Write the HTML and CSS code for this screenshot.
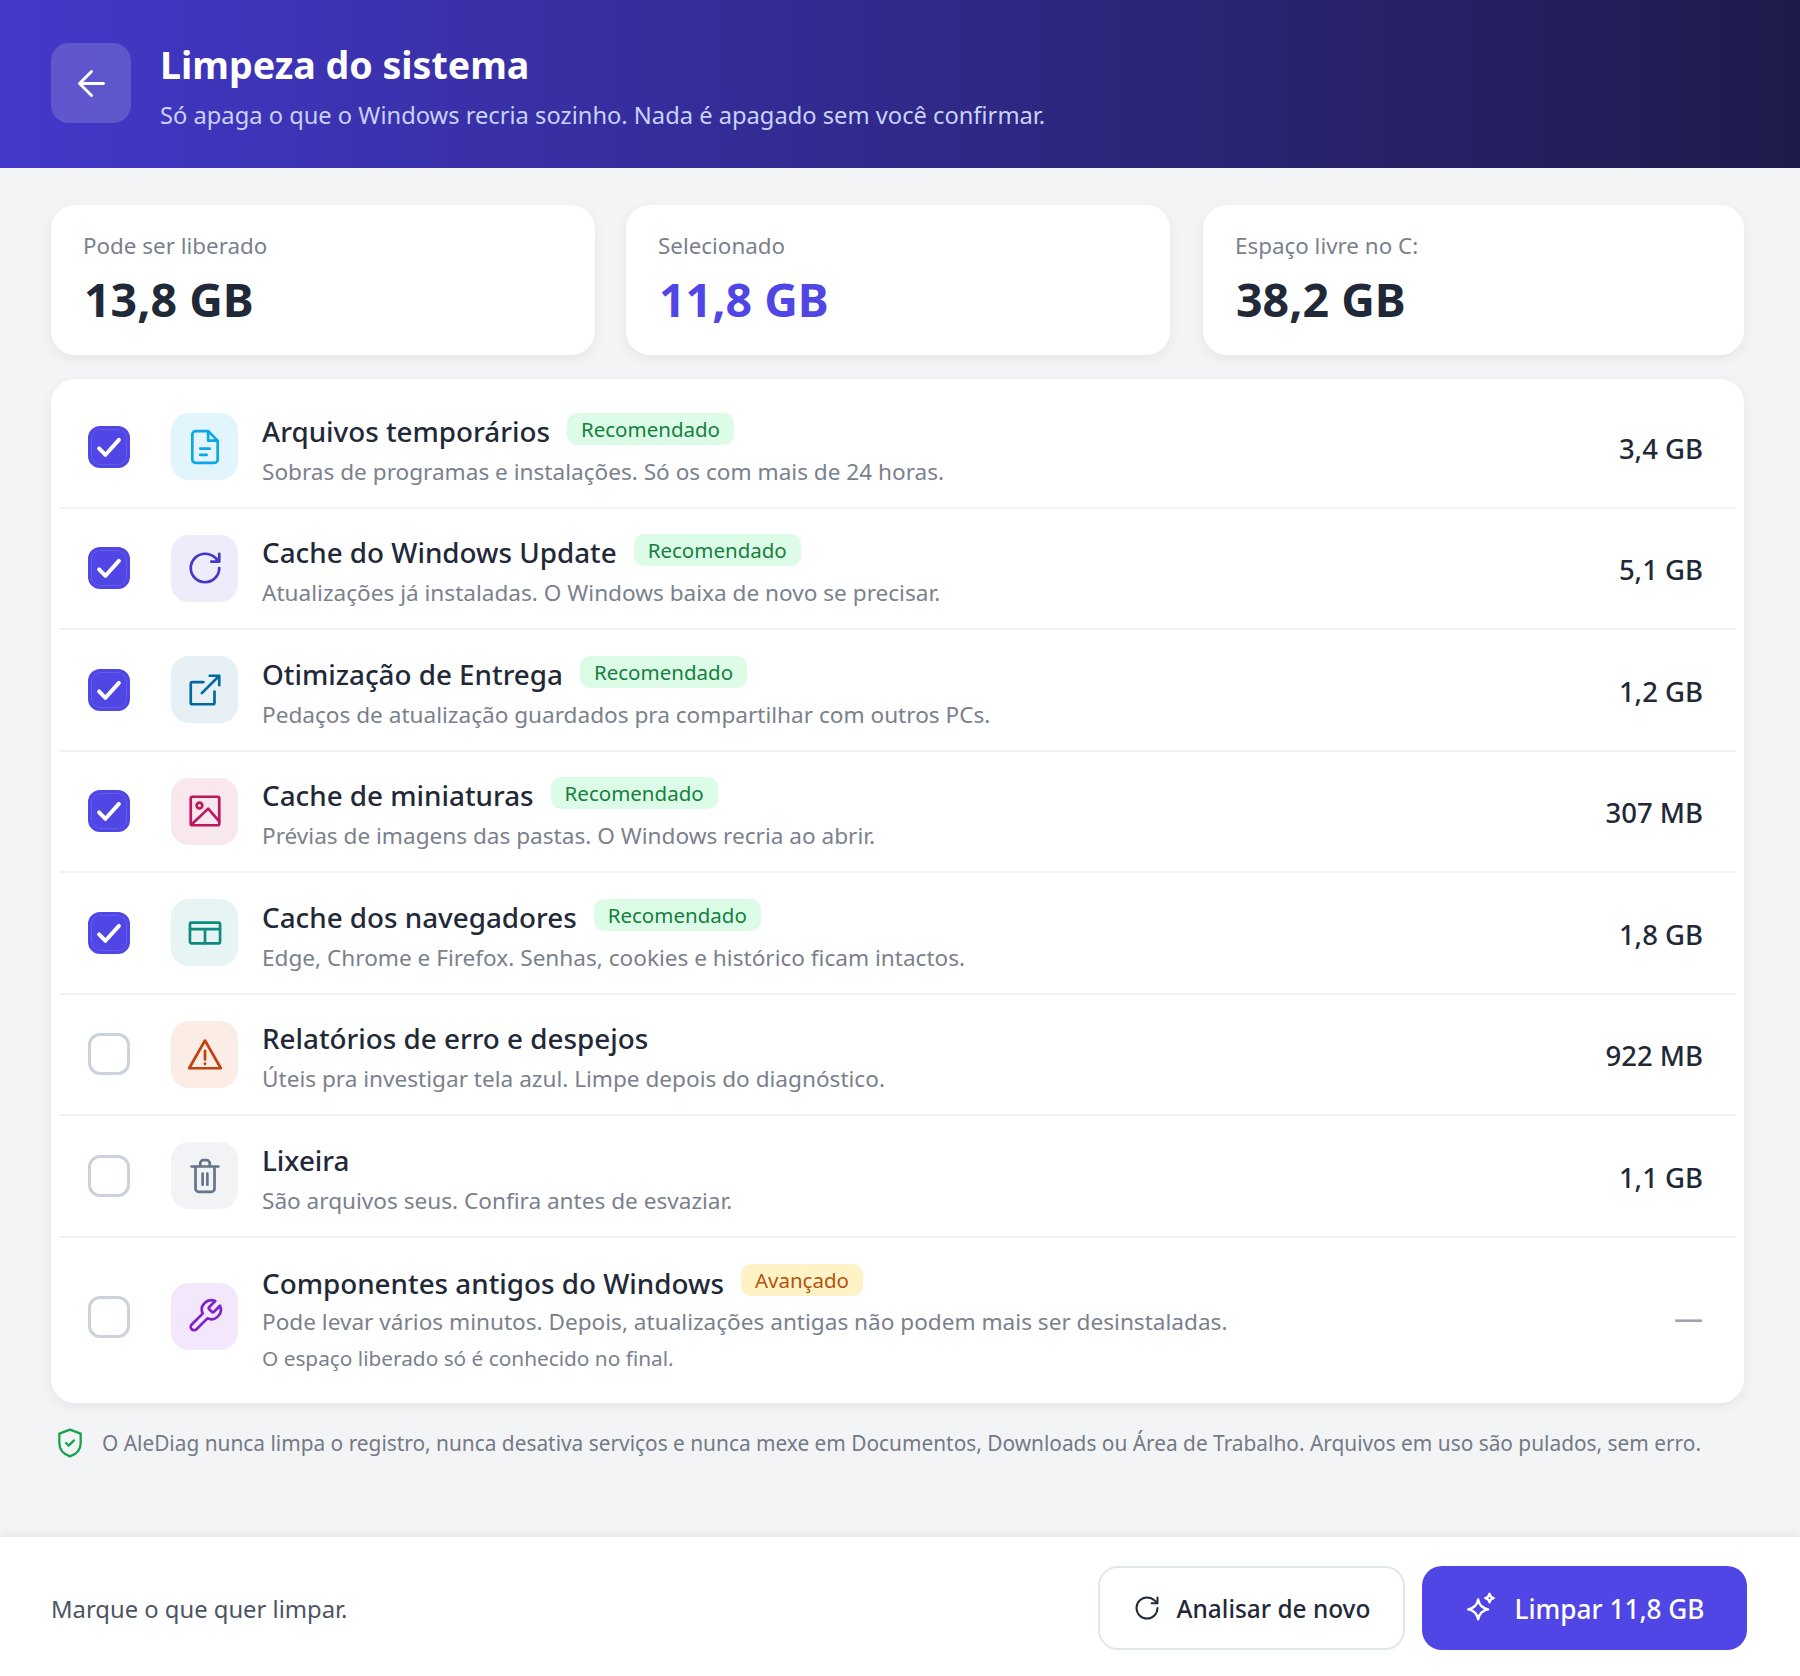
FILE: index.html
```html
<!DOCTYPE html>
<html lang="pt-BR">
<head>
    <meta charset="UTF-8">
    <title>Limpeza do sistema</title>
    <link rel="stylesheet" href="styles.css">
</head>
<body>
    <header class="top">
        <button class="back" type="button">
            <svg viewBox="0 0 24 24" class="ico-back"><path d="M19 12H5M12 19l-7-7 7-7"/></svg>
        </button>
        <div class="top-text">
            <h1>Limpeza do sistema</h1>
            <p class="sub">Só apaga o que o Windows recria sozinho. Nada é apagado sem você confirmar.</p>
        </div>
    </header>

    <main class="content">
        <section class="stats">
            <div class="stat">
                <div class="stat-label">Pode ser liberado</div>
                <div class="stat-value">13,8 GB</div>
            </div>
            <div class="stat">
                <div class="stat-label">Selecionado</div>
                <div class="stat-value accent">11,8 GB</div>
            </div>
            <div class="stat">
                <div class="stat-label">Espaço livre no C:</div>
                <div class="stat-value">38,2 GB</div>
            </div>
        </section>

        <section class="list">
            <div class="row">
                <span class="check on"><svg viewBox="0 0 24 24"><path d="M5 13l4.500 4.500L19 7"/></svg></span>
                <span class="tile t-sky"><svg viewBox="0 0 24 24"><path d="M9 13h6M9 17h4M18 22H6a2 2 0 0 1-2-2V4a2 2 0 0 1 2-2h8l6 6v12a2 2 0 0 1-2 2zM14 2v6h6"/></svg></span>
                <div class="info">
                    <div class="name-line"><span class="name">Arquivos temporários</span><span class="badge">Recomendado</span></div>
                    <div class="desc">Sobras de programas e instalações. Só os com mais de 24 horas.</div>
                </div>
                <div class="size">3,4 GB</div>
            </div>
            <div class="row">
                <span class="check on"><svg viewBox="0 0 24 24"><path d="M5 13l4.500 4.500L19 7"/></svg></span>
                <span class="tile t-indigo"><svg viewBox="0 0 24 24"><path d="M21 12a9 9 0 1 1-9-9c2.500 0 4.900 1 6.700 2.700L21 8M21 3v5h-5"/></svg></span>
                <div class="info">
                    <div class="name-line"><span class="name">Cache do Windows Update</span><span class="badge">Recomendado</span></div>
                    <div class="desc">Atualizações já instaladas. O Windows baixa de novo se precisar.</div>
                </div>
                <div class="size">5,1 GB</div>
            </div>
            <div class="row">
                <span class="check on"><svg viewBox="0 0 24 24"><path d="M5 13l4.500 4.500L19 7"/></svg></span>
                <span class="tile t-blue"><svg viewBox="0 0 24 24"><path d="M18 13v7a1 1 0 0 1-1 1H4a1 1 0 0 1-1-1V8a1 1 0 0 1 1-1h7M15 3h6v6M10 14 21 3"/></svg></span>
                <div class="info">
                    <div class="name-line"><span class="name">Otimização de Entrega</span><span class="badge">Recomendado</span></div>
                    <div class="desc">Pedaços de atualização guardados pra compartilhar com outros PCs.</div>
                </div>
                <div class="size">1,2 GB</div>
            </div>
            <div class="row">
                <span class="check on"><svg viewBox="0 0 24 24"><path d="M5 13l4.500 4.500L19 7"/></svg></span>
                <span class="tile t-pink"><svg viewBox="0 0 24 24"><rect x="3" y="3" width="18" height="18" rx="1"/><circle cx="8.500" cy="8.500" r="1.800"/><path d="M3.500 20.500 14 10.500l7 8"/></svg></span>
                <div class="info">
                    <div class="name-line"><span class="name">Cache de miniaturas</span><span class="badge">Recomendado</span></div>
                    <div class="desc">Prévias de imagens das pastas. O Windows recria ao abrir.</div>
                </div>
                <div class="size">307 MB</div>
            </div>
            <div class="row">
                <span class="check on"><svg viewBox="0 0 24 24"><path d="M5 13l4.500 4.500L19 7"/></svg></span>
                <span class="tile t-teal"><svg viewBox="0 0 24 24"><rect x="2.500" y="5.500" width="19" height="13" rx="1"/><path d="M2.500 9.500h19M12 9.500v9"/></svg></span>
                <div class="info">
                    <div class="name-line"><span class="name">Cache dos navegadores</span><span class="badge">Recomendado</span></div>
                    <div class="desc">Edge, Chrome e Firefox. Senhas, cookies e histórico ficam intactos.</div>
                </div>
                <div class="size">1,8 GB</div>
            </div>
            <div class="row">
                <span class="check"></span>
                <span class="tile t-orange"><svg viewBox="0 0 24 24"><path d="M12 3.500 2 21h20zM12 10v5.500M12 18v.300"/></svg></span>
                <div class="info">
                    <div class="name-line"><span class="name">Relatórios de erro e despejos</span></div>
                    <div class="desc">Úteis pra investigar tela azul. Limpe depois do diagnóstico.</div>
                </div>
                <div class="size">922 MB</div>
            </div>
            <div class="row">
                <span class="check"></span>
                <span class="tile t-gray"><svg viewBox="0 0 24 24"><path d="M3.500 6h17M6 6v14a2 2 0 0 0 2 2h8a2 2 0 0 0 2-2V6M9 6V4a2 2 0 0 1 2-2h2a2 2 0 0 1 2 2v2M10.500 10.500v7M13.500 10.500v7"/></svg></span>
                <div class="info">
                    <div class="name-line"><span class="name">Lixeira</span></div>
                    <div class="desc">São arquivos seus. Confira antes de esvaziar.</div>
                </div>
                <div class="size">1,1 GB</div>
            </div>
            <div class="row row-tall">
                <span class="check"></span>
                <span class="tile t-purple"><svg viewBox="0 0 24 24"><path d="M14.700 6.300a1 1 0 0 0 0 1.400l1.600 1.600a1 1 0 0 0 1.400 0l3.770-3.770a6 6 0 0 1-7.940 7.940l-6.910 6.910a2.120 2.120 0 0 1-3-3l6.910-6.910a6 6 0 0 1 7.940-7.940l-3.760 3.760z"/></svg></span>
                <div class="info">
                    <div class="name-line"><span class="name">Componentes antigos do Windows</span><span class="badge badge-warn">Avançado</span></div>
                    <div class="desc">Pode levar vários minutos. Depois, atualizações antigas não podem mais ser desinstaladas.</div>
                    <div class="extra">O espaço liberado só é conhecido no final.</div>
                </div>
                <div class="size size-dash">—</div>
            </div>
        </section>

        <p class="note">
            <svg viewBox="0 0 24 24" class="ico-shield"><path d="M12 2l8 3v7c0 5-3.500 8.500-8 10-4.500-1.500-8-5-8-10V5zM9 12l2 2 4-4"/></svg>
            <span>O AleDiag nunca limpa o registro, nunca desativa serviços e nunca mexe em Documentos, Downloads ou Área de Trabalho. Arquivos em uso são pulados, sem erro.</span>
        </p>
    </main>

    <footer class="bottom">
        <span class="hint">Marque o que quer limpar.</span>
        <div class="actions">
            <button class="btn btn-ghost" type="button">
                <svg viewBox="0 0 24 24"><path d="M21 12a9 9 0 1 1-9-9c2.500 0 4.900 1 6.700 2.700L21 8M21 3v5h-5"/></svg>
                <span class="btn-text">Analisar de novo</span>
            </button>
            <button class="btn btn-main" type="button">
                <svg viewBox="0 0 24 24"><path d="M10 6c.8 4.200 2.800 6.200 7 7-4.200.8-6.200 2.800-7 7-.8-4.200-2.800-6.200-7-7 4.200-.8 6.200-2.800 7-7zM18 2c.3 1.700 1.300 2.700 3 3-1.700.3-2.700 1.300-3 3-.3-1.700-1.300-2.700-3-3 1.700-.3 2.700-1.300 3-3z"/></svg>
                <span class="btn-text">Limpar 11,8 GB</span>
            </button>
        </div>
    </footer>
</body>
</html>
```

FILE: styles.css
```css
* { box-sizing: border-box; }
html, body { margin: 0; height: 100%; }
body { font-family: "Noto Sans", "Open Sans", sans-serif; background: #f3f4f6; color: #1f2937; display: flex; flex-direction: column; min-height: 1676px; }
svg { fill: none; stroke: currentColor; stroke-width: 1.7; stroke-linecap: round; stroke-linejoin: round; display: block; }

.top { height: 168px; flex: none; display: flex; align-items: center; gap: 29px; padding: 0 51px; background: linear-gradient(90deg, #4338ca 0%, #1e1b4b 100%); color: #fff; }
.top-text { margin-top: 4px; }
.back { width: 80px; height: 80px; margin-top: -2px; border: none; border-radius: 18px; background: rgba(255, 255, 255, 0.16); color: #fff; display: flex; align-items: center; justify-content: center; padding: 0; }
.ico-back { width: 41px; height: 41px; }
h1 { margin: 0; font-size: 37.600px; line-height: 48px; font-weight: 700; }
.sub { margin: 10px 0 0; font-size: 23.700px; line-height: 32px; color: #c7d2fe; }

.content { flex: 1; padding: 37px 51px 0 51px; }
.stats { display: flex; gap: 31px; }
.stat { width: 544px; height: 150px; background: #fff; border-radius: 24px; padding: 24px 32px; box-shadow: 0 4px 14px rgba(0, 0, 0, 0.06); }
.stat:last-child { width: 541px; margin-left: 2px; }
.stat-label { font-size: 22.400px; line-height: 33px; color: #7a818d; }
.stat-value { margin-top: 6px; margin-left: 1px; font-size: 46.500px; line-height: 62px; font-weight: 700; color: #1f2937; }
.accent { color: #4f46e5; }

.list { margin-top: 24px; width: 1693px; background: #fff; border-radius: 24px; padding: 8px; box-shadow: 0 4px 14px rgba(0, 0, 0, 0.06); }
.row { display: flex; align-items: center; height: 121.500px; border-bottom: 2px solid #f1f2f6; padding: 0 33px 0 29px; }
.row-tall { height: 157px; border-bottom: none; }
.check { width: 42px; height: 42px; flex: none; border-radius: 12px; border: 3px solid #cbd2dc; background: #fff; display: flex; align-items: center; justify-content: center; }
.row-tall .check { position: relative; top: 1px; }
.check.on { background: #4f46e5; border-color: #4f46e5; color: #fff; box-shadow: inset 0 0 0 1px rgba(255, 255, 255, 0.12); }
.check svg { width: 34px; height: 34px; flex: none; stroke-width: 2.800; }
.tile { width: 67px; height: 67px; flex: none; margin: 0 24px 0 41px; border-radius: 18px; display: flex; align-items: center; justify-content: center; }
.tile svg { width: 38px; height: 38px; }
.t-sky { background: #e3f5fc; color: #0ea5e9; }
.t-indigo { background: #eeecfa; color: #4338ca; }
.t-blue { background: #e6f0f5; color: #0369a1; }
.t-pink { background: #f9e7ee; color: #be185d; }
.t-teal { background: #e6f4f3; color: #0f8a7e; }
.t-orange { background: #fbece6; color: #c2410c; }
.t-gray { background: #f1f3f5; color: #64748b; }
.t-purple { background: #f3e8fb; color: #7e22ce; }
.info { flex: 1; min-width: 0; padding-top: 6px; }
.row-tall .info { padding-top: 4px; }
.name-line { display: flex; align-items: center; gap: 17px; height: 36px; }
.name { font-size: 27.800px; line-height: 36px; font-weight: 500; color: #1f2937; }
.badge { height: 32px; padding: 0 14px; border-radius: 10px; background: #dcfce7; color: #15803d; font-size: 20.500px; line-height: 32px; position: relative; top: -2px; }
.badge-warn { background: #fef3c7; color: #b45309; top: -3px; }
.desc { margin-top: 8px; font-size: 22.600px; line-height: 30px; color: #7a818d; }
.row-tall .desc { margin-top: 6px; }
.extra { margin-top: 7px; font-size: 20.800px; line-height: 28px; color: #7a818d; }
.size { font-size: 27.500px; line-height: 34px; font-weight: 500; color: #1f2937; text-align: right; position: relative; top: 2px; }
.size-dash { color: #9ca3af; font-size: 29px; }

.note { margin: 24px 0 0 3px; display: flex; align-items: center; gap: 16px; font-size: 20.850px; line-height: 30px; color: #737a87; }
.ico-shield { width: 32px; height: 32px; flex: none; color: #16a34a; }

.bottom { height: 139px; flex: none; background: #fff; display: flex; align-items: center; justify-content: space-between; padding: 2px 53px 0 51px; box-shadow: 0 -2px 10px rgba(0, 0, 0, 0.07); }
.hint { font-size: 23.800px; color: #4b5563; position: relative; top: 1px; }
.actions { display: flex; gap: 17px; }
.btn { height: 84px; border-radius: 20px; display: flex; align-items: center; justify-content: center; gap: 16px; font-family: inherit; font-weight: 500; }
.btn-text { position: relative; top: 1px; }
.btn svg { width: 28px; height: 28px; flex: none; }
.btn-ghost { width: 307px; background: #fff; border: 2px solid #e2e6ee; color: #1f2937; font-size: 24.400px; }
.btn-main { width: 325px; background: #4f46e5; border: none; color: #fff; font-size: 26.200px; }
.btn-main svg { width: 34px; height: 34px; }
```
